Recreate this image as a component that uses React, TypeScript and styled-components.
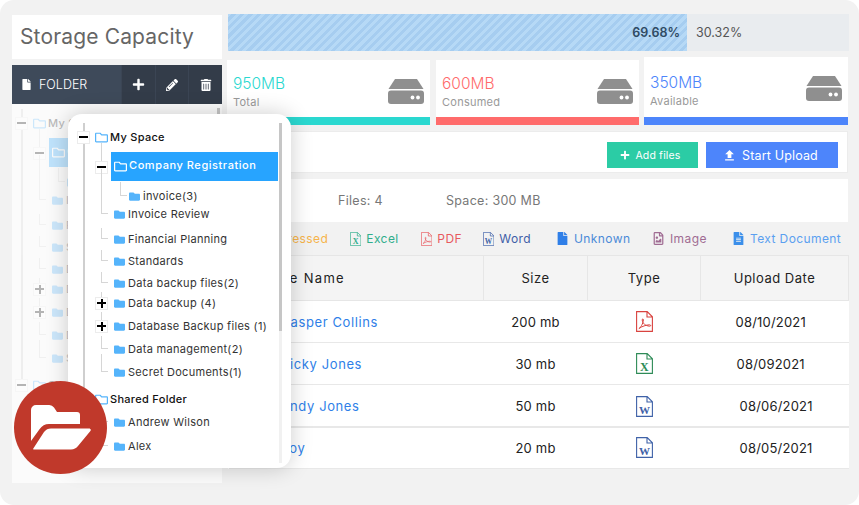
import styled, { createGlobalStyle } from "styled-components";
import { FaFile, FaFileAlt, FaFolder, FaPencilAlt, FaPlus, FaRegFileImage, FaRegFolder, FaTrashAlt } from "react-icons/fa";
import { MdFileUpload } from "react-icons/md";

const GlobalStyle = createGlobalStyle`
  * { box-sizing: border-box; }
  html, body { margin: 0; padding: 0; background: #fff; }
  body { font-family: Inter, "Open Sans", sans-serif; }
`;

const Panel = styled.div`
  width: 859px;
  height: 505px;
  background: #f2f2f2;
  border-radius: 14px;
  padding: 14px 10px 0 12px;
  display: flex;
  gap: 5px;
  position: relative;
  overflow: hidden;
`;
const Sidebar = styled.aside`
  width: 210px;
  flex: none;
  display: flex;
  flex-direction: column;
`;
const TitleCard = styled.div`
  height: 44px;
  margin-top: 1px;
  background: #fff;
  display: flex;
  align-items: center;
  padding: 0 0 2px 8px;
  font-size: 21px;
  letter-spacing: 0.15px;
  color: #666;
`;
const FolderBar = styled.div`
  height: 39px;
  margin-top: 6px;
  background: #3e4a5a;
  display: flex;
  color: #fff;
`;
const FolderLabel = styled.div`
  width: 109px;
  display: flex;
  align-items: center;
  gap: 7px;
  padding: 0 0 1px 9px;
  font-size: 12.5px;
  font-weight: 300;
`;
const FolderAction = styled.div`
  flex: 1;
  display: flex;
  align-items: center;
  justify-content: center;
  background: #333c49;
  border-left: 1px solid #3b4554;
`;
const TreePanel = styled.div`
  height: 379px;
  background: #fbfbfb;
  padding: 10px 0 0 3px;
  position: relative;
  & > div { opacity: 0.28; }
`;
const ScrollBar = styled.i<{ $left: number; $top: number; $thumb: number; $track: number }>`
  position: absolute;
  left: ${(p) => p.$left}px;
  top: ${(p) => p.$top}px;
  width: 3px;
  height: ${(p) => p.$track}px;
  background: linear-gradient(#c6c6c6 ${(p) => p.$thumb}px, #f1f1f1 ${(p) => p.$thumb}px);
`;
const Popup = styled.div`
  position: absolute;
  left: 68px;
  top: 114px;
  width: 223px;
  height: 354px;
  background: #fff;
  border-radius: 14px;
  box-shadow: 0 0 22px rgba(0, 0, 0, 0.2);
  padding: 14px 0 0 9px;
`;
const Badge = styled.div`
  position: absolute;
  left: 14px;
  top: 381px;
  width: 93px;
  height: 93px;
  border-radius: 50%;
  background: #c0392b;
  display: flex;
  align-items: center;
  justify-content: center;
`;

const Tree = styled.div`
  width: 201px;
  position: relative;
  &::before {
    content: "";
    position: absolute;
    left: 6px;
    top: -5px;
    width: 2px;
    height: 276px;
    background: #cfcfcf;
  }
`;
const Row = styled.div<{ $gap: number; $level: number; $active?: boolean }>`
  position: relative;
  height: ${(p) => (p.$active ? 29 : 18)}px;
  margin-top: ${(p) => p.$gap}px;
  padding-left: ${(p) => [15, 34, 49][p.$level]}px;
  display: flex;
`;
const Elbow = styled.i<{ $left: number; $reach: number }>`
  position: absolute;
  left: ${(p) => p.$left}px;
  bottom: 50%;
  width: 7px;
  height: ${(p) => p.$reach}px;
  border-left: 1px solid #d6d6d6;
  border-bottom: 1px solid #d6d6d6;
`;
const Toggle = styled.i<{ $left: number; $plus?: boolean }>`
  position: absolute;
  left: ${(p) => p.$left}px;
  top: 50%;
  margin-top: -6px;
  width: 13px;
  height: 13px;
  background: #fff;
  border: 1px solid #ececec;
  &::before {
    content: "";
    position: absolute;
    left: 1px;
    top: 4px;
    width: 9px;
    height: 2px;
    background: #000;
  }
  &::after {
    content: "";
    display: ${(p) => (p.$plus ? "block" : "none")};
    position: absolute;
    left: 4.5px;
    top: 1px;
    width: 2px;
    height: 9px;
    background: #000;
  }
`;
const Node = styled.div<{ $active?: boolean; $strong?: boolean }>`
  display: flex;
  align-items: center;
  gap: ${(p) => (p.$active || p.$strong ? 2 : 3)}px;
  padding-left: 3px;
  flex: ${(p) => (p.$active ? 1 : "none")};
  background: ${(p) => (p.$active ? "#27a4ff" : "transparent")};
  color: ${(p) => (p.$active ? "#fff" : p.$strong ? "#111" : "#333")};
  font-size: 11px;
  font-weight: ${(p) => (p.$active || p.$strong ? 500 : 400)};
  letter-spacing: ${(p) => (p.$active ? 0.56 : 0.3)}px;
  white-space: nowrap;
  & > svg { flex: none; color: ${(p) => (p.$active ? "#fff" : "#55b4fb")}; }
  & > span { position: relative; top: ${(p) => (p.$active ? -1.5 : 0)}px; }
`;

const Main = styled.main`
  width: 622px;
  flex: none;
`;
const Progress = styled.div`
  height: 37px;
  margin-left: 1px;
  width: 621px;
  background: #e9ecef;
  display: flex;
  font-size: 12.5px;
  align-items: stretch;
`;
const ProgressFill = styled.div`
  width: 459px;
  background: repeating-linear-gradient(-45deg, #b6d9f6 0 3px, #a6cdf0 3px 6px);
  color: #2f4a63;
  font-weight: 600;
  display: flex;
  align-items: center;
  justify-content: flex-end;
  padding-right: 7px;
`;
const ProgressRest = styled.div`
  color: #555;
  display: flex;
  align-items: center;
  padding-left: 9px;
`;
const Stats = styled.div`
  display: grid;
  grid-template-columns: repeat(3, 203px);
  column-gap: 6px;
  align-items: end;
  height: 74px;
`;
const StatCard = styled.div<{ $raised?: boolean; $accent: string }>`
  height: ${(p) => (p.$raised ? 68 : 65)}px;
  margin-left: ${(p) => (p.$raised ? -1 : 0)}px;
  background: #fff;
  border-bottom: 8px solid ${(p) => p.$accent};
  padding: ${(p) => (p.$raised ? 17 : 15)}px 6px 0;
  display: flex;
  justify-content: space-between;
`;
const StatValue = styled.div<{ $color: string }>`
  color: ${(p) => p.$color};
  font-size: 15.5px;
  font-weight: 300;
  line-height: 18px;
`;
const StatLabel = styled.div`
  color: #999;
  font-size: 11px;
  line-height: 14px;
  margin-top: 2px;
  letter-spacing: 0.25px;
`;
const DriveIcon = styled.svg<{ $raised?: boolean }>`
  width: 36px;
  height: 25px;
  margin-top: ${(p) => (p.$raised ? 2 : 4)}px;
`;
const UploadBar = styled.div`
  height: 42px;
  margin: 6px 0 0 1px;
  width: 620px;
  background: #fff;
  border: 1px solid #ececec;
  display: flex;
  align-items: center;
  justify-content: flex-end;
  gap: 8px;
  padding: 6px 9px 0 0;
`;
const ActionButton = styled.div<{ $bg: string; $w: number; $size: number }>`
  width: ${(p) => p.$w}px;
  height: 26px;
  background: ${(p) => p.$bg};
  color: #fff;
  font-size: ${(p) => p.$size}px;
  letter-spacing: 0.15px;
  display: flex;
  align-items: center;
  justify-content: center;
  gap: 5px;
  padding-right: 4px;
`;
const InfoRow = styled.div`
  height: 43px;
  margin: 6px 0 0 1px;
  width: 620px;
  background: #fff;
  display: flex;
  align-items: center;
  padding-left: 110px;
  gap: 63px;
  font-size: 12.5px;
  letter-spacing: 0.3px;
  color: #777;
`;
const Legend = styled.div`
  height: 33px;
  display: flex;
  align-items: center;
  justify-content: flex-end;
  padding-right: 7px;
  font-size: 12px;
  letter-spacing: 0.4px;
`;
const LegendItem = styled.div<{ $color: string; $icon?: string; $w: number }>`
  width: ${(p) => p.$w}px;
  display: flex;
  align-items: center;
  gap: 5px;
  color: ${(p) => p.$color};
  white-space: nowrap;
  & > svg { color: ${(p) => p.$icon ?? p.$color}; flex: none; }
`;
const Table = styled.table`
  margin-left: 1px;
  width: 620px;
  table-layout: fixed;
  border-collapse: collapse;
  font-size: 13px;
  letter-spacing: 0.2px;
  color: #222;
  background: #fff;
`;
const HeadCell = styled.th<{ $w: number }>`
  width: ${(p) => p.$w}px;
  height: 45px;
  background: #f4f4f4;
  border: 1px solid #e6e6e6;
  font-weight: 400;
  letter-spacing: 0.5px;
  text-align: center;
  padding: 0;
`;
const NameHead = styled(HeadCell)`
  text-align: left;
  padding-left: 43px;
  letter-spacing: 1.3px;
`;
const BodyRow = styled.tr<{ $thick?: boolean }>`
  height: 42px;
  border-bottom: ${(p) => (p.$thick ? 2 : 1)}px solid #e8e8e8;
  & > td { padding-top: ${(p) => (p.$thick ? 2 : 0)}px; }
`;
const NameCell = styled.td`
  color: #2f7fe8;
  padding: 0 0 0 52px;
  letter-spacing: 0.6px;
`;
const CenterCell = styled.td`
  text-align: center;
  padding: 0;
  & > svg { display: block; margin: 0 auto; }
`;
const DateCell = styled.td<{ $pad: number }>`
  padding: 0 0 0 ${(p) => p.$pad}px;
`;

type Kind = "pdf" | "excel" | "word";

const KIND_COLOR: Record<Kind, string> = { pdf: "#d9433f", excel: "#2e8b57", word: "#3f62a8" };

const FileIcon = ({ kind, size, color }: { kind: Kind; size: number; color?: string }) => {
  const c = color ?? KIND_COLOR[kind];
  return (
    <svg width={(size * 17) / 21} height={size} viewBox="0 0 17 21" fill="none">
      <path d="M.6.6h10.6l5.2 5.2v14.6H.6zM11 .8v5.2h5.2" stroke={c} strokeWidth="1.1" />
      {kind === "pdf" && (
        <path
          d="M2.8 17.6c1.6-.7 4.2-4.6 4.6-8.6.1-1.4-1.3-1.4-1.2 0 .3 3.4 3.2 5.800 7.400 6.200 1.600.1 1.400-1.500-.2-1.400-3.300.2-7.600 1.600-10.200 3.600"
          stroke={c}
          strokeWidth="1"
        />
      )}
      {kind !== "pdf" && (
        <text x="8.500" y="17.500" textAnchor="middle" fontFamily="Liberation Serif, serif" fontWeight="700" fontSize={kind === "word" ? 11 : 12} fill={c}>
          {kind === "word" ? "W" : "X"}
        </text>
      )}
    </svg>
  );
};

const Drive = ({ raised }: { raised?: boolean }) => (
  <DriveIcon viewBox="0 0 36 25" $raised={raised}>
    <path d="M7 0h22l6.500 10H.5z" fill="#8f8f8f" />
    <rect y="11.500" width="36" height="13.500" rx="3" fill="#8f8f8f" />
    <circle cx="24.500" cy="18.500" r="1.900" fill="#fff" />
    <circle cx="30" cy="18.500" r="1.900" fill="#fff" />
  </DriveIcon>
);

type TreeItem = {
  label: string;
  level: 0 | 1 | 2;
  gap: number;
  reach?: number;
  toggle?: "minus" | "plus";
  active?: boolean;
};

const TREE: TreeItem[] = [
  { label: "My Space", level: 0, gap: 0, toggle: "minus" },
  { label: "Company Registration", level: 1, gap: 6, toggle: "minus", active: true, reach: 24 },
  { label: "invoice(3)", level: 2, gap: 6, reach: 14 },
  { label: "Invoice Review", level: 1, gap: 0, reach: 45 },
  { label: "Financial Planning", level: 1, gap: 7, reach: 11 },
  { label: "Standards", level: 1, gap: 4, reach: 11 },
  { label: "Data backup files(2)", level: 1, gap: 4, reach: 11 },
  { label: "Data backup (4)", level: 1, gap: 2, toggle: "plus", reach: 11 },
  { label: "Database Backup files (1)", level: 1, gap: 5, toggle: "plus", reach: 14 },
  { label: "Data management(2)", level: 1, gap: 5, reach: 13 },
  { label: "Secret Documents(1)", level: 1, gap: 5, reach: 18 },
  { label: "Shared Folder", level: 0, gap: 9, toggle: "minus" },
  { label: "Andrew Wilson", level: 1, gap: 5, reach: 10 },
  { label: "Alex", level: 1, gap: 6, reach: 12 },
];

const FolderTree = () => (
  <Tree>
    {TREE.map((item) => {
      const open = item.level === 0 || item.active;
      return (
        <Row key={item.label} $gap={item.gap} $level={item.level} $active={item.active}>
          {item.reach && <Elbow $left={item.level === 2 ? 43 : 24} $reach={item.reach} />}
          {item.toggle && <Toggle $left={item.level === 0 ? 0 : 18} $plus={item.toggle === "plus"} />}
          <Node $active={item.active} $strong={item.level === 0}>
            {open ? <FaRegFolder size={13} /> : <FaFolder size={11} />}
            <span>{item.label}</span>
          </Node>
        </Row>
      );
    })}
  </Tree>
);

const LEGEND_ICON_SIZE = 14;

const ROWS = [
  { name: "Casper Collins", size: "200 mb", kind: "pdf" as Kind, date: "08/10/2021", pad: 35 },
  { name: "Vicky Jones", size: "30 mb", kind: "excel" as Kind, date: "08/092021", pad: 36 },
  { name: "Andy Jones", size: "50 mb", kind: "word" as Kind, date: "08/06/2021", pad: 39, thick: true },
  { name: "Roy", size: "20 mb", kind: "word" as Kind, date: "08/05/2021", pad: 39 },
];

const STATS = [
  { value: "950MB", label: "Total", color: "#2ad8d0" },
  { value: "600MB", label: "Consumed", color: "#ff6b6b" },
  { value: "350MB", label: "Available", color: "#4d85fb", raised: true },
];

export default function App() {
  return (
    <>
      <GlobalStyle />
      <Panel>
        <Sidebar>
          <TitleCard>Storage Capacity</TitleCard>
          <FolderBar>
            <FolderLabel>
              <FaFile size={11} />
              FOLDER
            </FolderLabel>
            <FolderAction>
              <FaPlus size={13} />
            </FolderAction>
            <FolderAction>
              <FaPencilAlt size={12} />
            </FolderAction>
            <FolderAction>
              <FaTrashAlt size={12} />
            </FolderAction>
          </FolderBar>
          <TreePanel>
            <FolderTree />
            <ScrollBar $left={205} $top={4} $thumb={210} $track={360} />
          </TreePanel>
        </Sidebar>

        <Main>
          <Progress>
            <ProgressFill>69.68%</ProgressFill>
            <ProgressRest>30.32%</ProgressRest>
          </Progress>
          <Stats>
            {STATS.map((s) => (
              <StatCard key={s.label} $accent={s.color} $raised={s.raised}>
                <div>
                  <StatValue $color={s.color}>{s.value}</StatValue>
                  <StatLabel>{s.label}</StatLabel>
                </div>
                <Drive raised={s.raised} />
              </StatCard>
            ))}
          </Stats>
          <UploadBar>
            <ActionButton $bg="#2bcca5" $w={91} $size={10.5}>
              <FaPlus size={10} />
              Add files
            </ActionButton>
            <ActionButton $bg="#4d85fb" $w={132} $size={12.5}>
              <MdFileUpload size={15} />
              Start Upload
            </ActionButton>
          </UploadBar>
          <InfoRow>
            <span>Files: 4</span>
            <span>Space: 300 MB</span>
          </InfoRow>
          <Legend>
            <LegendItem $color="#f6b44b" $w={115}>
              <FaFile size={LEGEND_ICON_SIZE - 2} />
              Compressed
            </LegendItem>
            <LegendItem $color="#2fae8c" $w={71}>
              <FileIcon kind="excel" size={LEGEND_ICON_SIZE} color="#2fae8c" />
              Excel
            </LegendItem>
            <LegendItem $color="#e8595f" $w={62}>
              <FileIcon kind="pdf" size={LEGEND_ICON_SIZE} color="#e8595f" />
              PDF
            </LegendItem>
            <LegendItem $color="#3f5ea8" $w={73}>
              <FileIcon kind="word" size={LEGEND_ICON_SIZE} />
              Word
            </LegendItem>
            <LegendItem $color="#4b8ad8" $icon="#2f7fe8" $w={96}>
              <FaFile size={LEGEND_ICON_SIZE - 1} />
              Unknown
            </LegendItem>
            <LegendItem $color="#a06c93" $w={80}>
              <FaRegFileImage size={LEGEND_ICON_SIZE - 1} />
              Image
            </LegendItem>
            <LegendItem $color="#5ba0f0" $icon="#3b8fea" $w={110}>
              <FaFileAlt size={LEGEND_ICON_SIZE - 1} />
              Text Document
            </LegendItem>
          </Legend>
          <Table>
            <thead>
              <tr>
                <NameHead $w={255}>File Name</NameHead>
                <HeadCell $w={104}>Size</HeadCell>
                <HeadCell $w={113}>Type</HeadCell>
                <HeadCell $w={148}>Upload Date</HeadCell>
              </tr>
            </thead>
            <tbody>
              {ROWS.map((r) => (
                <BodyRow key={r.name} $thick={r.thick}>
                  <NameCell>{r.name}</NameCell>
                  <CenterCell>{r.size}</CenterCell>
                  <CenterCell>
                    <FileIcon kind={r.kind} size={21} />
                  </CenterCell>
                  <DateCell $pad={r.pad}>{r.date}</DateCell>
                </BodyRow>
              ))}
            </tbody>
          </Table>
        </Main>

        <Popup>
          <FolderTree />
          <ScrollBar $left={211} $top={9} $thumb={208} $track={340} />
        </Popup>
        <Badge>
          <svg width="60" height="45" viewBox="0 0 60 45" fill="#fff">
            <path d="M0 36V5a5 5 0 0 1 5-5h13a6 6 0 0 1 5 2.500L26 7h20a3 3 0 0 1 3 3v9H18c-4 0-7 1.800-9.500 5.200z" />
            <path d="M2 44l11-17c2-2.500 4-3.500 7-3.500h38c1.500 0 2.300 1.200 1.400 2.400L47 41c-1.700 2.300-4 3.500-7 3.500H3c-1 0-1.500-.5-1-.5z" />
          </svg>
        </Badge>
      </Panel>
    </>
  );
}
